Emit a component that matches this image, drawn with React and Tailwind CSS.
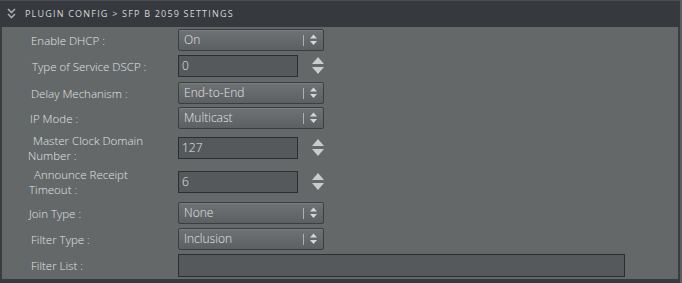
import React from 'react';

const rows = [
  { label: ['Enable DHCP :'], type: 'select', value: 'On', mt: 'mt-[2px]', lx: 'pl-[29px]' },
  { label: ['Type of Service DSCP :'], type: 'number', value: '0', mt: 'mt-[4px]', lx: 'pl-[30px]' },
  { label: ['Delay Mechanism :'], type: 'select', value: 'End-to-End', mt: 'mt-[5px]', lx: 'pl-[29px]' },
  { label: ['IP Mode :'], type: 'select', value: 'Multicast', mt: 'mt-[3px]', lx: 'pl-[28px]' },
  { label: ['Master Clock Domain', 'Number :'], type: 'number', value: '127', mt: 'mt-[4px]', lx: 'pl-[26px]', ind: true },
  { label: ['Announce Receipt', 'Timeout :'], type: 'number', value: '6', mt: 'mt-[4px]', lx: 'pl-[27px]', ind: true },
  { label: ['Join Type :'], type: 'select', value: 'None', mt: 'mt-[5px]', lx: 'pl-[27px]' },
  { label: ['Filter Type :'], type: 'select', value: 'Inclusion', mt: 'mt-[4px]', lx: 'pl-[29px]' },
  { label: ['Filter List :'], type: 'text', value: '', mt: 'mt-[4px]', lx: 'pl-[29px]' },
];

function UpDown({ big }) {
  if (big) {
    return (
      <svg width="12" height="18" viewBox="0 0 12 18" className="ml-[14px]">
        <path d="M6 0 L12 7 L0 7 Z" fill="#c9cbcc" />
        <path d="M0 10 L12 10 L6 17 Z" fill="#c9cbcc" />
      </svg>
    );
  }
  return (
    <svg width="7" height="12" viewBox="0 0 7 12">
      <path d="M3.5 0.5 L7 4.5 L0 4.5 Z" fill="#d4d6d7" />
      <path d="M0 7 L7 7 L3.5 11 Z" fill="#d4d6d7" />
    </svg>
  );
}

function Control({ row }) {
  if (row.type === 'select') {
    return (
      <div className="flex h-[22px] w-[146px] items-center rounded-[2px] border border-[#3b3e41] bg-gradient-to-b from-[#6f7275] to-[#5d6063] pl-[5px] pr-[6px] shadow-[inset_0_1px_0_#7a7d80]">
        <span className="flex-1 text-[12px] font-light text-[#e4e4e4]">{row.value}</span>
        <span className="mr-[6px] h-[11px] w-px bg-[#aeb0b2]" />
        <UpDown />
      </div>
    );
  }
  if (row.type === 'number') {
    return (
      <div className="flex items-center">
        <div className="flex h-[22px] w-[120px] items-center border border-[#2c2f31] bg-[#56595b] pl-[3px] text-[12px] font-light text-[#e4e4e4]">
          {row.value}
        </div>
        <UpDown big />
      </div>
    );
  }
  return <div className="h-[23px] w-[447px] border border-[#2c2f31] bg-[#56595b]" />;
}

export default function App() {
  return (
    <div className="flex h-[283px] w-[682px] flex-col bg-[#5b5e61]" style={{ fontFamily: '"Open Sans", "DejaVu Sans", sans-serif' }}>
      <div className="flex w-[680px] flex-col">
        <div className="flex h-[27px] items-center border-t border-[#4a4d51] bg-[#36393d] pl-[7px]">
          <svg width="9" height="12" viewBox="0 0 9 12">
            <path d="M1 1 L4.5 4.5 L8 1" fill="none" stroke="#a9acae" strokeWidth="1.6" />
            <path d="M1 6 L4.5 9.5 L8 6" fill="none" stroke="#a9acae" strokeWidth="1.6" />
          </svg>
          <span className="ml-[9px] text-[9px] uppercase tracking-[1.2px] text-[#d6d7d8]">
            Plugin Config &gt; SFP B 2059 Settings
          </span>
        </div>
        <div className="flex h-[252px] flex-col border-l-2 border-r-2 border-[#3a3d40] bg-[#646869]">
          {rows.map((row, i) => (
            <div key={i} className={`flex ${row.mt} items-center`}>
              <div className={`w-[176px] ${row.lx} text-[11.5px] font-light leading-[15px] text-[#e2e3e3]`}>
                {row.label.map((l, j) => (
                  <div key={j} className={row.ind && j === 0 ? 'pl-[5px]' : ''}>{l}</div>
                ))}
              </div>
              <Control row={row} />
            </div>
          ))}
        </div>
      </div>
      <div className="h-[4px] w-[680px] bg-[#383b3e]" />
    </div>
  );
}
